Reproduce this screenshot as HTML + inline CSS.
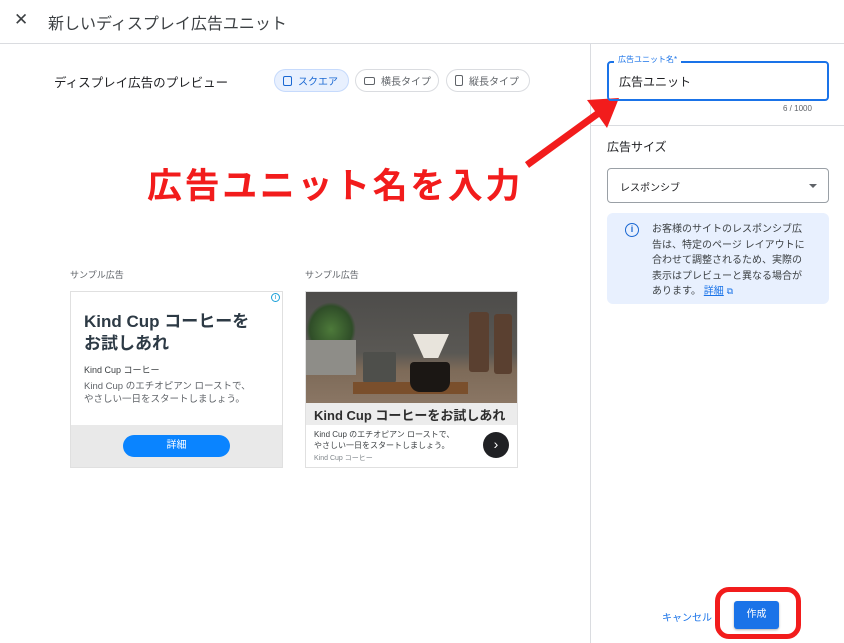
<!DOCTYPE html>
<html><head><meta charset="utf-8"><style>
*{margin:0;padding:0;box-sizing:border-box}
body{width:844px;height:643px;overflow:hidden;background:#fff;font-family:"Liberation Sans","Noto Sans CJK JP",sans-serif;color:#3c4043;position:relative}
.a{position:absolute}
.chip{position:absolute;top:69px;height:23px;border:1px solid #dadce0;border-radius:12px;font-size:10px;color:#5f6368;display:flex;align-items:center;padding-left:8px;gap:6px}
.ico{display:inline-block;border:1.5px solid #5f6368;border-radius:2px}
</style></head><body>
<div class="a" style="left:14px;top:10px;font-size:17px;color:#3c4043">✕</div>
<div class="a" style="left:48px;top:10px;font-size:16px;color:#3c4043">新しいディスプレイ広告ユニット</div>
<div class="a" style="left:0;top:43px;width:844px;height:1px;background:#dadce0"></div>
<div class="a" style="left:590px;top:43px;width:1px;height:600px;background:#dadce0"></div>
<div class="a" style="left:591px;top:125px;width:253px;height:1px;background:#dadce0"></div>

<div class="a" style="left:54px;top:72px;font-size:12.5px;color:#202124">ディスプレイ広告のプレビュー</div>
<div class="chip" style="left:274px;width:75px;background:#e8f0fe;border-color:#c6dafc;color:#1967d2"><span class="ico" style="width:9px;height:10px;border-color:#1967d2"></span>スクエア</div>
<div class="chip" style="left:355px;width:84px"><span class="ico" style="width:11px;height:8px"></span>横長タイプ</div>
<div class="chip" style="left:446px;width:84px"><span class="ico" style="width:8px;height:11px"></span>縦長タイプ</div>

<div class="a" style="left:147px;top:158px;font-size:35px;font-weight:bold;color:#f21c1c;letter-spacing:2.6px">広告ユニット名を入力</div>
<svg class="a" style="left:515px;top:90px" width="110" height="85"><line x1="12" y1="75" x2="85" y2="22" stroke="#f21c1c" stroke-width="7"/><polygon points="104,8 72,10 92,38" fill="#f21c1c"/></svg>

<div class="a" style="left:70px;top:268px;font-size:9px;color:#5f6368">サンプル広告</div>
<div class="a" style="left:305px;top:268px;font-size:9px;color:#5f6368">サンプル広告</div>

<div class="a" style="left:70px;top:291px;width:213px;height:177px;border:1px solid #e0e0e0;background:#fff">
 <div class="a" style="right:2px;top:1px;width:9px;height:9px;border:1px solid #1aa0d8;border-radius:50%;font-size:7px;color:#1aa0d8;text-align:center;line-height:8px">i</div>
 <div class="a" style="left:13px;top:19px;font-size:17px;font-weight:bold;line-height:22px;color:#2d3a45">Kind Cup コーヒーを<br>お試しあれ</div>
 <div class="a" style="left:13px;top:71px;font-size:9px;color:#3c4043">Kind Cup コーヒー</div>
 <div class="a" style="left:13px;top:88px;font-size:9.5px;line-height:13px;color:#5f6368">Kind Cup のエチオピアン ローストで、<br>やさしい一日をスタートしましょう。</div>
 <div class="a" style="left:0;top:133px;width:211px;height:42px;background:#e9e9e9"></div>
 <div class="a" style="left:52px;top:143px;width:107px;height:22px;border-radius:11px;background:#0a84ff;color:#fff;font-size:10px;text-align:center;line-height:22px">詳細</div>
</div>

<div class="a" style="left:305px;top:291px;width:213px;height:177px;border:1px solid #e0e0e0;background:#fff;overflow:hidden">
 <div class="a" style="left:0;top:0;width:211px;height:111px;background:linear-gradient(#4d4c4a 0%,#5a5854 55%,#7d6a58 70%,#8a7664 100%)"></div>
 <div class="a" style="left:0;top:10px;width:50px;height:55px;background:radial-gradient(#4d7a3a,#2f4d28 60%,transparent 70%)"></div>
 <div class="a" style="left:0;top:48px;width:50px;height:35px;background:#8e8d88"></div>
 <div class="a" style="left:57px;top:60px;width:33px;height:32px;background:#4e4f4b;border-radius:2px 2px 4px 4px"></div>
 <div class="a" style="left:47px;top:90px;width:115px;height:12px;background:#7a4f2c"></div>
 <div class="a" style="left:107px;top:42px;width:36px;height:24px;background:#e8e4dc;clip-path:polygon(0 0,100% 0,70% 100%,30% 100%)"></div>
 <div class="a" style="left:104px;top:70px;width:40px;height:30px;background:#1b1714;border-radius:4px 4px 10px 10px"></div>
 <div class="a" style="left:163px;top:20px;width:20px;height:60px;background:#5a4030;border-radius:3px"></div>
 <div class="a" style="left:188px;top:22px;width:18px;height:60px;background:#5a4030;border-radius:3px"></div>
 <div class="a" style="left:0;top:111px;width:211px;height:22px;background:#ececec"></div>
 <div class="a" style="left:8px;top:113px;font-size:13px;font-weight:bold;color:#2d2d2d">Kind Cup コーヒーをお試しあれ</div>
 <div class="a" style="left:8px;top:137px;font-size:8px;line-height:11px;color:#3c4043">Kind Cup のエチオピアン ローストで、<br>やさしい一日をスタートしましょう。</div>
 <div class="a" style="left:8px;top:161px;font-size:7px;color:#80868b">Kind Cup コーヒー</div>
 <div class="a" style="left:177px;top:140px;width:26px;height:26px;border-radius:50%;background:#202124;color:#fff;font-size:14px;text-align:center;line-height:25px">›</div>
</div>

<div class="a" style="left:607px;top:61px;width:222px;height:40px;border:2px solid #1a73e8;border-radius:4px"></div>
<div class="a" style="left:614px;top:54px;background:#fff;padding:0 4px;font-size:8px;color:#1a73e8">広告ユニット名*</div>
<div class="a" style="left:619px;top:73px;font-size:12px;color:#202124">広告ユニット</div>
<div class="a" style="left:783px;top:104px;font-size:8px;color:#5f6368">6 / 1000</div>

<div class="a" style="left:607px;top:138px;font-size:12px;color:#202124">広告サイズ</div>
<div class="a" style="left:607px;top:168px;width:222px;height:35px;border:1px solid #9aa0a6;border-radius:4px"></div>
<div class="a" style="left:620px;top:179px;font-size:10px;color:#202124">レスポンシブ</div>
<div class="a" style="left:809px;top:184px;width:0;height:0;border-left:4px solid transparent;border-right:4px solid transparent;border-top:4px solid #5f6368"></div>
<div class="a" style="left:607px;top:213px;width:222px;height:91px;background:#e8f0fe;border-radius:6px"></div>
<div class="a" style="left:625px;top:223px;width:14px;height:14px;border:1.5px solid #1967d2;border-radius:50%;color:#1967d2;font-size:9px;font-weight:bold;text-align:center;line-height:11px">i</div>
<div class="a" style="left:652px;top:222px;font-size:10px;line-height:15.5px;color:#3c4043;width:153px">お客様のサイトのレスポンシブ広告は、特定のページ レイアウトに合わせて調整されるため、実際の表示はプレビューと異なる場合があります。 <span style="color:#1a73e8;text-decoration:underline">詳細</span> <span style="color:#1a73e8;font-size:9px">⧉</span></div>

<div class="a" style="left:662px;top:609px;font-size:10px;color:#1a73e8">キャンセル</div>
<div class="a" style="left:734px;top:601px;width:45px;height:28px;background:#1a73e8;border-radius:3px;color:#fff;font-size:10px;text-align:center;line-height:28px;box-shadow:0 1px 2px rgba(0,0,0,.3)">作成</div>
<div class="a" style="left:715px;top:587px;width:86px;height:52px;border:5px solid #f21c1c;border-radius:14px"></div>
</body></html>
